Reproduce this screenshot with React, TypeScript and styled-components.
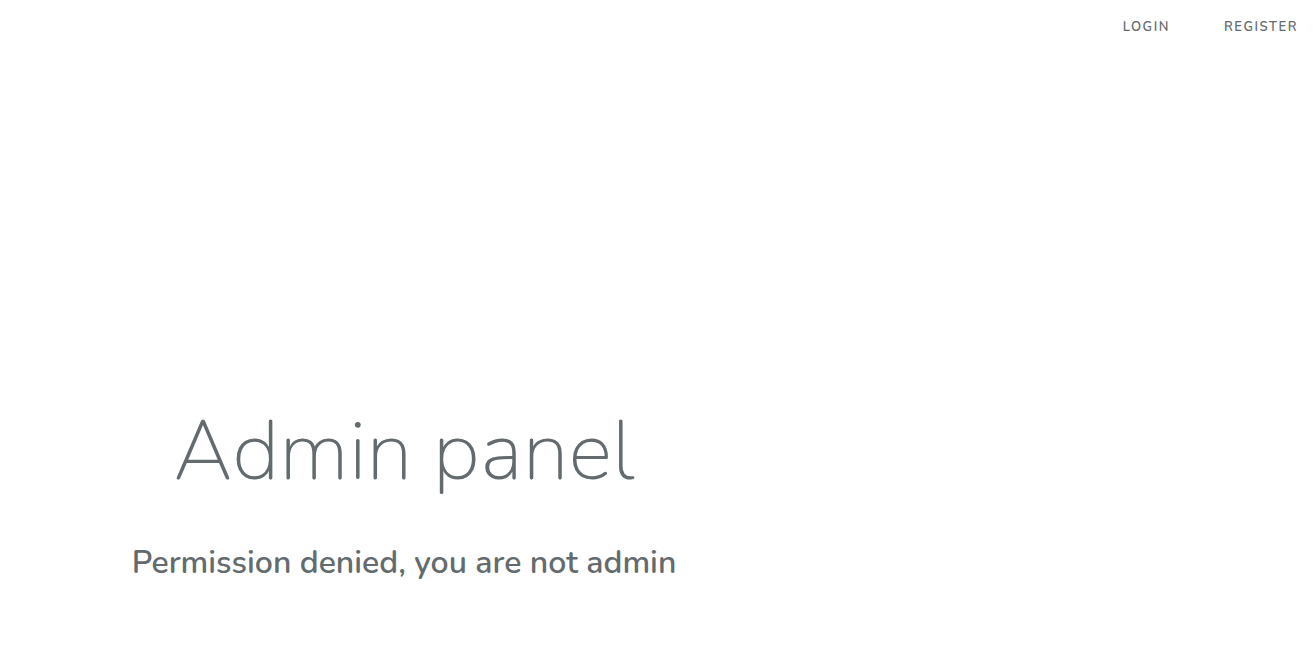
import React from "react";
import styled, { createGlobalStyle } from "styled-components";

const Global = createGlobalStyle`
  html, body { margin: 0; padding: 0; background: #fff; }
  body { font-family: Nunito, Lato, "Open Sans", sans-serif; color: #636b6f; }
`;

const Page = styled.div`
  width: 1313px;
  height: 654px;
  display: flex;
  flex-direction: column;
`;

const NavBar = styled.nav`
  display: flex;
  justify-content: flex-end;
  align-items: center;
  height: 54px;
  padding-right: 15px;
  gap: 54px;
`;

const NavLink = styled.a`
  font-size: 13px;
  font-weight: 600;
  letter-spacing: 1.55px;
  text-transform: uppercase;
  color: #636b6f;
  text-decoration: none;
`;

const Content = styled.main`
  width: 808px;
  display: flex;
  flex-direction: column;
  align-items: center;
  padding-top: 348px;
`;

const Title = styled.h1`
  margin: 0;
  font-size: 83px;
  font-weight: 200;
  line-height: 1.2;
  color: #636b6f;
`;

const Subtitle = styled.h2`
  margin: 42px 0 0;
  font-size: 32px;
  font-weight: 600;
  line-height: 1.2;
  color: #636b6f;
`;

export default function App() {
  return (
    <Page>
      <Global />
      <NavBar>
        <NavLink href="#">Login</NavLink>
        <NavLink href="#">Register</NavLink>
      </NavBar>
      <Content>
        <Title>Admin panel</Title>
        <Subtitle>Permission denied, you are not admin</Subtitle>
      </Content>
    </Page>
  );
}
